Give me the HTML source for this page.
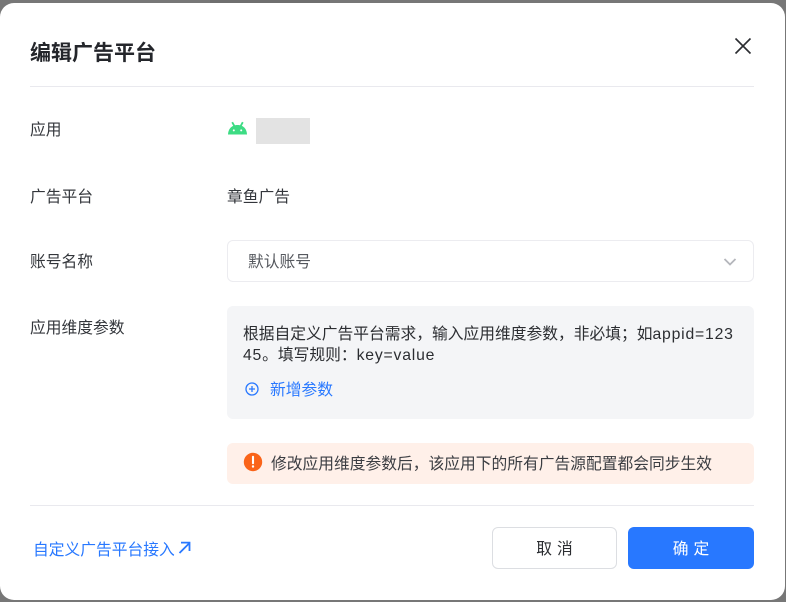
<!DOCTYPE html>
<html lang="zh">
<head>
<meta charset="utf-8">
<title>编辑广告平台</title>
<style>
html,body{margin:0;padding:0;width:786px;height:602px;overflow:hidden;background:#777;font-family:"Liberation Sans","Noto Sans CJK SC",sans-serif;}
.abs{position:absolute;white-space:nowrap;}
#modal{position:absolute;left:0;top:3px;width:785px;height:597px;background:#fff;border-radius:14px;}
#root{position:absolute;left:0;top:0;width:786px;height:602px;overflow:hidden;}
.lab{font-size:15.75px;line-height:22px;color:#33363b;}
.line{position:absolute;height:1px;background:#e9e9ee;}
.la{letter-spacing:.8px;}
</style>
</head>
<body>
<div id="root">
<div class="abs" style="left:210px;top:0;width:120px;height:3px;background:#6f6f6f"></div>
<div id="modal"></div>

<div class="abs" style="left:30px;top:40px;font-size:21px;line-height:28px;font-weight:700;color:#24262b;">编辑广告平台</div>
<svg class="abs" style="left:733px;top:36px" width="20" height="20" viewBox="0 0 20 20"><path d="M2.5 2.5 17.5 17.5M17.5 2.5 2.5 17.5" stroke="#2b2d31" stroke-width="1.6" fill="none"/></svg>
<div class="line" style="left:30px;top:86px;width:724px"></div>

<div class="abs lab" style="left:30px;top:120px">应用</div>
<svg class="abs" style="left:228px;top:121px" width="19" height="14" viewBox="0 0 19 14"><path d="M0 13.5C0.2 8 3.5 4 9.5 4S18.8 8 19 13.5Z" fill="#3ddc84"/><path d="M4.2 1.2 6.6 5.5M14.8 1.2 12.4 5.5" stroke="#3ddc84" stroke-width="1.8" fill="none"/><circle cx="5.8" cy="9.4" r="1" fill="#fff"/><circle cx="13.2" cy="9.4" r="1" fill="#fff"/></svg>
<div class="abs" style="left:256px;top:118px;width:54px;height:26px;background:#e3e3e3"></div>

<div class="abs lab" style="left:30px;top:187px">广告平台</div>
<div class="abs lab" style="left:227px;top:187px">章鱼广告</div>

<div class="abs lab" style="left:30px;top:252px">账号名称</div>
<div class="abs" style="left:227px;top:240px;width:525px;height:40px;border:1px solid #ececf0;border-radius:6px;background:#fff"></div>
<div class="abs" style="left:248px;top:252px;font-size:15.75px;line-height:22px;color:#55585e">默认账号</div>
<svg class="abs" style="left:723px;top:257px" width="14" height="10" viewBox="0 0 14 10"><path d="M1.5 2 7 7.5 12.5 2" stroke="#b4b6bb" stroke-width="1.8" fill="none"/></svg>

<div class="abs lab" style="left:30px;top:318px">应用维度参数</div>
<div class="abs" style="left:227px;top:306px;width:527px;height:113px;background:#f4f5f7;border-radius:6px"></div>
<div class="abs" style="left:243px;top:324px;font-size:15.75px;line-height:21px;color:#2b2d31">根据自定义广告平台需求，输入应用维度参数，非必填；如<span class="la">appid=123</span><br><span class="la">45</span>。填写规则：<span class="la">key=value</span></div>
<svg class="abs" style="left:244px;top:381px" width="16" height="16" viewBox="0 0 16 16"><circle cx="8" cy="8" r="6" stroke="#2878ff" stroke-width="1.3" fill="none"/><path d="M8 5V11M5 8H11" stroke="#2878ff" stroke-width="1.3" fill="none"/></svg>
<div class="abs" style="left:270px;top:380px;font-size:15.75px;line-height:22px;color:#2878ff">新增参数</div>

<div class="abs" style="left:227px;top:443px;width:527px;height:41px;background:#fff0e9;border-radius:6px"></div>
<svg class="abs" style="left:243px;top:452px" width="20" height="20" viewBox="0 0 20 20"><circle cx="10" cy="10" r="9.2" fill="#fa6419"/><path d="M10 4.8V11.2" stroke="#fff" stroke-width="2.1" stroke-linecap="round"/><circle cx="10" cy="14.5" r="1.2" fill="#fff"/></svg>
<div class="abs" style="left:271px;top:454px;font-size:15.75px;line-height:22px;color:#3b3d42">修改应用维度参数后，该应用下的所有广告源配置都会同步生效</div>

<div class="line" style="left:30px;top:505px;width:724px"></div>

<div class="abs" style="left:33px;top:540px;font-size:15.75px;line-height:22px;color:#2878ff">自定义广告平台接入</div>
<svg class="abs" style="left:177px;top:541px" width="14" height="14" viewBox="0 0 14 14"><path d="M2.5 12 12.5 2M4 1.6H12.5V10" stroke="#2878ff" stroke-width="1.8" fill="none"/></svg>

<div class="abs" style="left:492px;top:527px;width:123px;height:40px;border:1px solid #dcdee2;border-radius:6px;background:#fff;text-align:center;font-size:15.75px;line-height:43px;letter-spacing:5px;text-indent:5px;color:#2b2d31">取消</div>
<div class="abs" style="left:628px;top:527px;width:126px;height:42px;border-radius:6px;background:#2878ff;text-align:center;font-size:15.75px;line-height:45px;letter-spacing:5px;text-indent:5px;color:#fff">确定</div>
</div>
</body>
</html>
